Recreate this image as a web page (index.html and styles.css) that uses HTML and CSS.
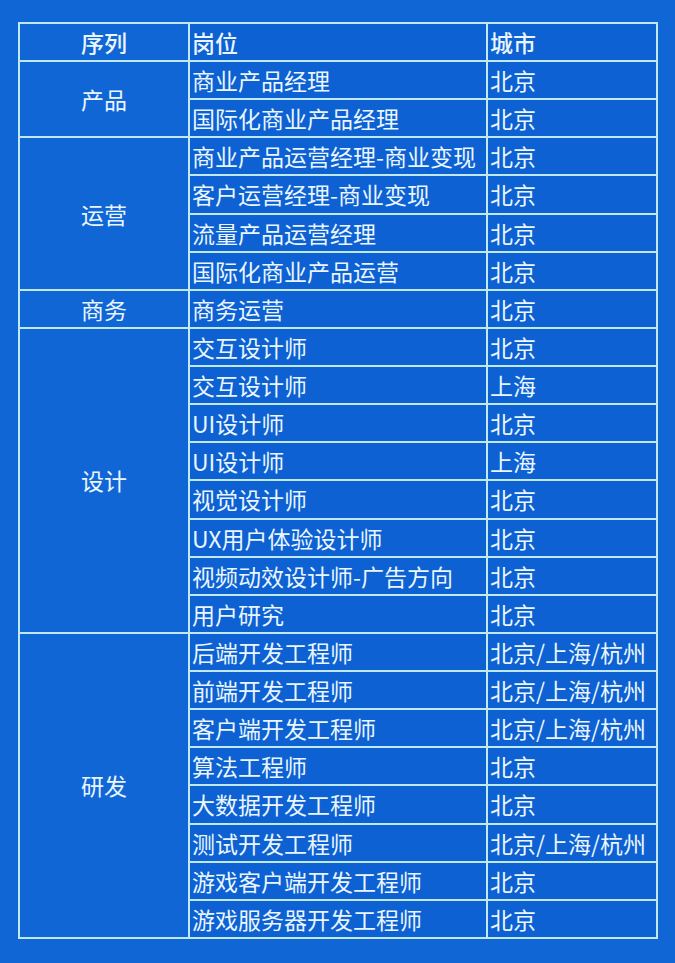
FILE: index.html
```html
<!DOCTYPE html>
<html lang="zh-CN">
<head>
<meta charset="utf-8">
<title>岗位列表</title>
<link rel="stylesheet" href="styles.css">
</head>
<body>
<div class="page">
<table class="jobs">
  <colgroup><col class="c1"><col class="c2"><col class="c3"></colgroup>
  <thead>
    <tr><th class="seq">序列</th><th>岗位</th><th>城市</th></tr>
  </thead>
  <tbody>
    <tr><td class="seq" rowspan="2">产品</td><td>商业产品经理</td><td>北京</td></tr>
    <tr><td>国际化商业产品经理</td><td>北京</td></tr>
    <tr><td class="seq" rowspan="4">运营</td><td>商业产品运营经理-商业变现</td><td>北京</td></tr>
    <tr><td>客户运营经理-商业变现</td><td>北京</td></tr>
    <tr><td>流量产品运营经理</td><td>北京</td></tr>
    <tr><td>国际化商业产品运营</td><td>北京</td></tr>
    <tr><td class="seq">商务</td><td>商务运营</td><td>北京</td></tr>
    <tr><td class="seq" rowspan="8">设计</td><td>交互设计师</td><td>北京</td></tr>
    <tr><td>交互设计师</td><td>上海</td></tr>
    <tr><td>UI设计师</td><td>北京</td></tr>
    <tr><td>UI设计师</td><td>上海</td></tr>
    <tr><td>视觉设计师</td><td>北京</td></tr>
    <tr><td>UX用户体验设计师</td><td>北京</td></tr>
    <tr><td>视频动效设计师-广告方向</td><td>北京</td></tr>
    <tr><td>用户研究</td><td>北京</td></tr>
    <tr><td class="seq" rowspan="8">研发</td><td>后端开发工程师</td><td>北京/上海/杭州</td></tr>
    <tr><td>前端开发工程师</td><td>北京/上海/杭州</td></tr>
    <tr><td>客户端开发工程师</td><td>北京/上海/杭州</td></tr>
    <tr><td>算法工程师</td><td>北京</td></tr>
    <tr><td>大数据开发工程师</td><td>北京</td></tr>
    <tr><td>测试开发工程师</td><td>北京/上海/杭州</td></tr>
    <tr><td>游戏客户端开发工程师</td><td>北京</td></tr>
    <tr><td>游戏服务器开发工程师</td><td>北京</td></tr>
  </tbody>
</table>
</div>
</body>
</html>
```

FILE: styles.css
```css
html, body {
  margin: 0;
  padding: 0;
  background: #1166d6;
}
body {
  width: 675px;
  height: 963px;
  overflow: hidden;
  font-family: "Noto Sans CJK SC", "Noto Sans", "Liberation Sans", sans-serif;
  color: #e9f6ff;
}
.page {
  padding: 22px 0 0 18px;
}
.jobs {
  border-collapse: collapse;
  table-layout: fixed;
  width: 638px;
  height: 917px;
}
.jobs col.c1 { width: 170px; }
.jobs col.c2 { width: 298px; }
.jobs col.c3 { width: 170px; }
.jobs th,
.jobs td {
  border: 2px solid #bfeaf4;
  height: 36px;
  padding: 0 0 0 2px;
  font-size: 23px;
  font-weight: 400;
  line-height: 36px;
  text-align: left;
  white-space: nowrap;
  background: #0d61d2;
}
.jobs .seq {
  text-align: center;
  padding-left: 0;
  background: #1166d6;
}
.jobs th {
  font-weight: 500;
}
```
